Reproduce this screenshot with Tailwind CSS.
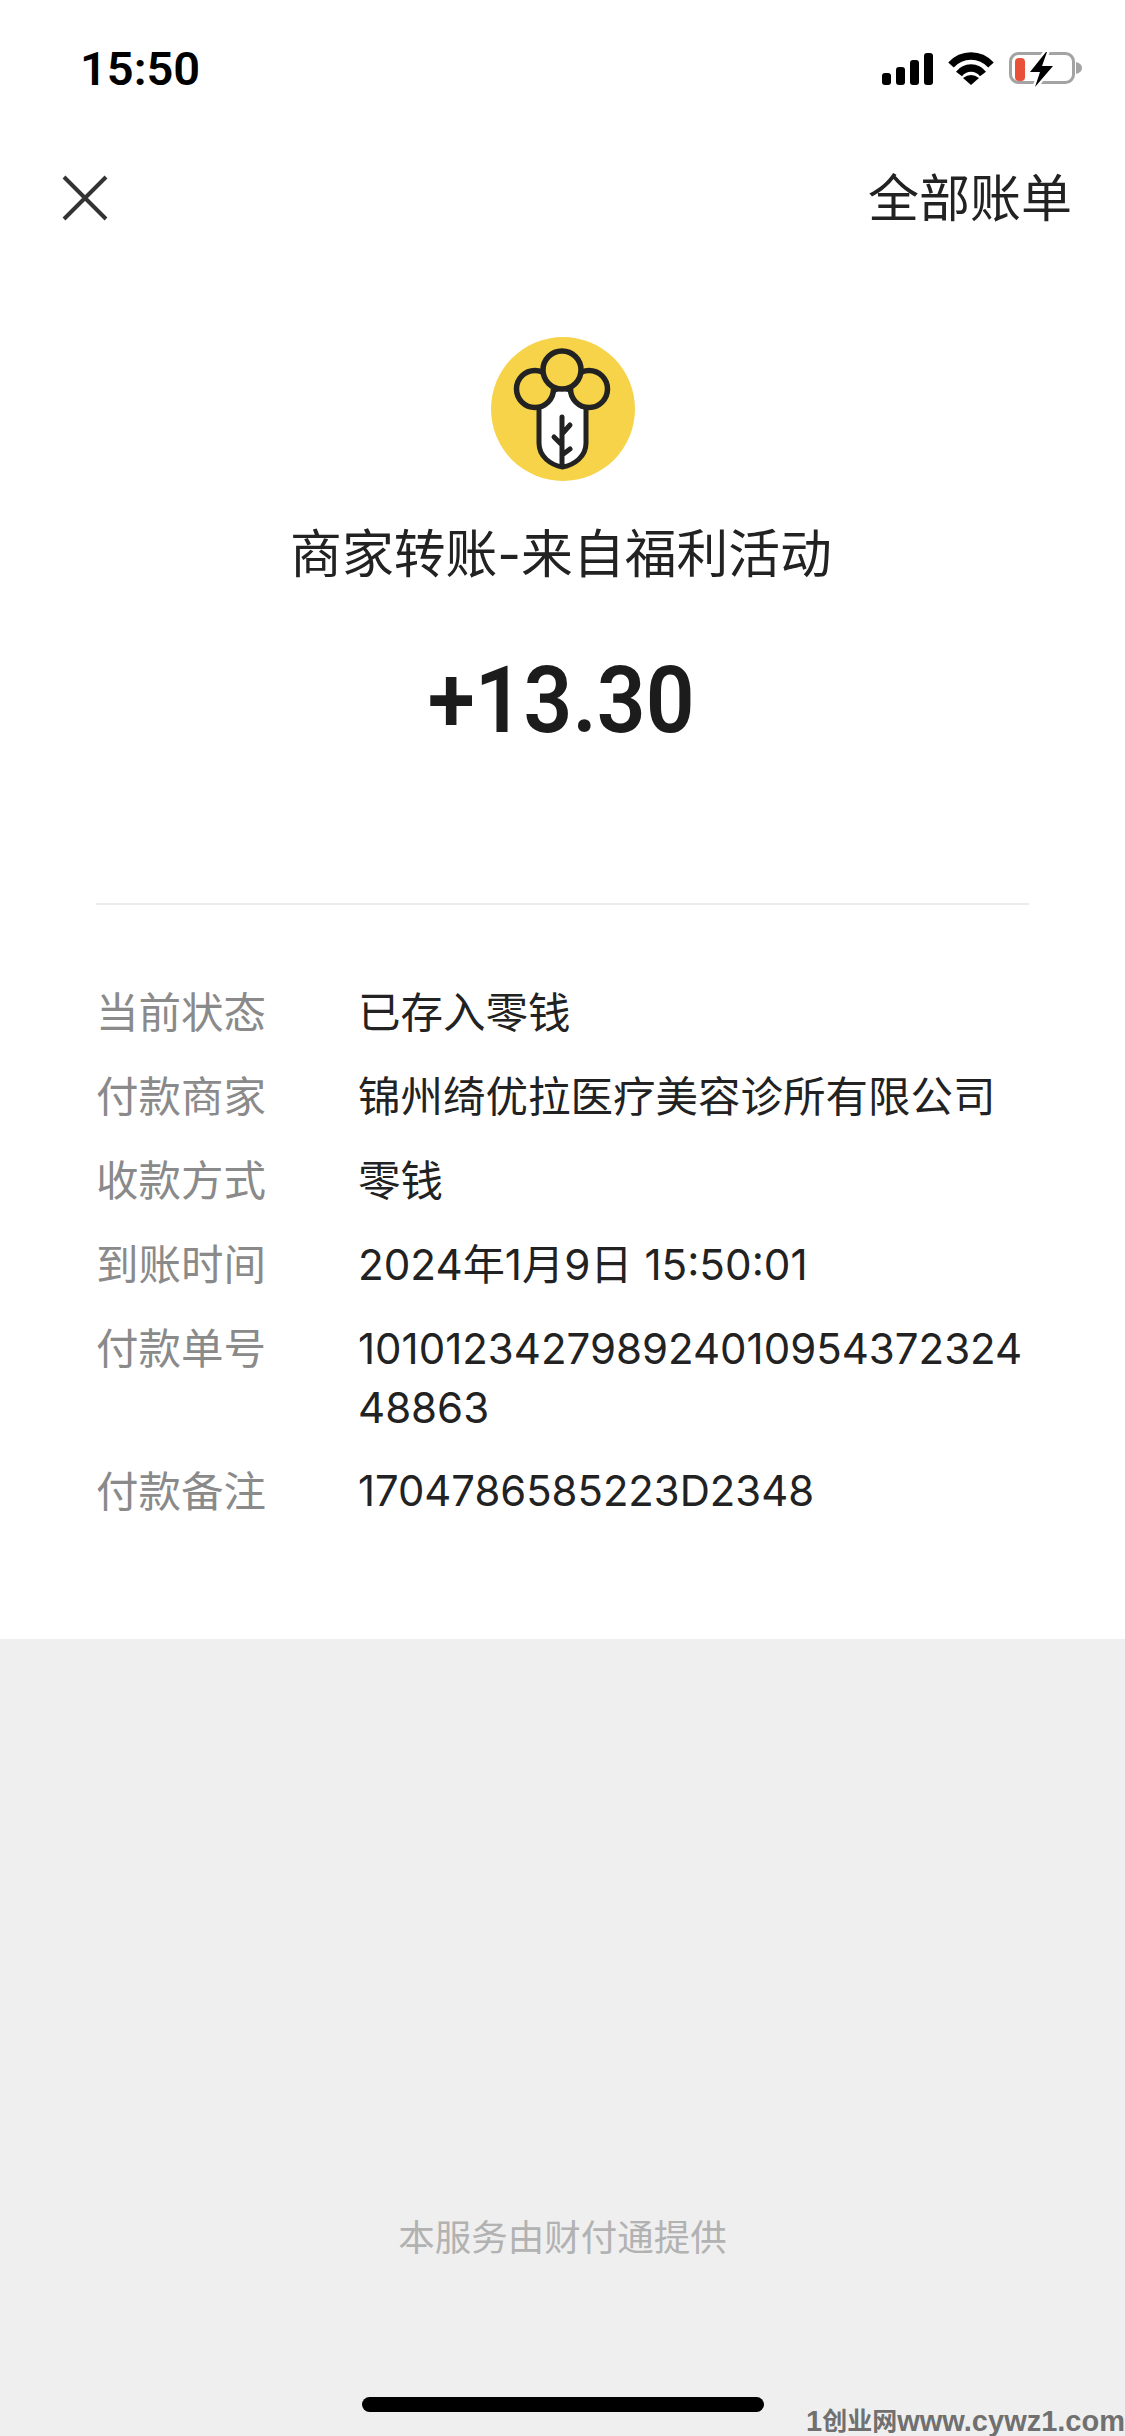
<!DOCTYPE html>
<html lang="zh-CN">
<head>
  <meta charset="UTF-8" />
  <meta name="viewport" content="width=device-width, initial-scale=1.0"/>
  <title>账单详情</title>
  <script src="https://cdn.jsdelivr.net/npm/@tailwindcss/browser@4"></script>
</head>
<body class="m-0 bg-[#efefef] font-['Inter','Noto_Sans_CJK_SC',sans-serif]">
  <div class="relative flex h-[2436px] w-[1125px] flex-col overflow-hidden">
    <div class="flex h-[1639px] flex-col bg-white">
      <!-- status bar -->
      <div class="flex h-[136px] shrink-0 items-center justify-between pl-[80px] pr-[43px]">
        <span class="text-[47px] leading-none font-semibold text-black font-['Roboto',sans-serif]">15:50</span>
        <div class="flex items-center gap-[15px]">
          <svg class="mt-[2px]" width="51" height="32" viewBox="0 0 51 32" fill="#000">
            <rect x="0" y="20" width="9" height="12" rx="3"/>
            <rect x="14" y="14" width="9" height="18" rx="3"/>
            <rect x="28" y="7" width="9" height="25" rx="3"/>
            <rect x="42" y="0" width="9" height="32" rx="3"/>
          </svg>
          <svg width="46" height="34" viewBox="0 0 46 34" fill="none" stroke="#000">
            <path d="M3 14 C14 2 32 2 43 14" stroke-width="7.500"/>
            <path d="M11 23 C17 15 29 15 35 23" stroke-width="7.500"/>
            <path d="M15 27 Q23 21 31 27 L23 34 Z" fill="#000" stroke="none"/>
          </svg>
          <svg width="73" height="38" viewBox="0 0 73 38" fill="none">
            <rect x="1.500" y="4.500" width="63" height="29" rx="8" stroke="#a3a3a3" stroke-width="3"/>
            <rect x="6" y="9" width="10" height="23" rx="4" fill="#e8503a"/>
            <path d="M67 13 C71 14 73 16 73 19 C73 22 71 24 67 25 Z" fill="#a3a3a3"/>
            <path d="M37 3 L21 23 H31 L26 38 L44 17 H33 L38 3 Z" fill="#000" stroke="#fff" stroke-width="5" paint-order="stroke"/>
          </svg>
        </div>
      </div>

      <!-- nav bar -->
      <div class="flex h-[124px] shrink-0 items-center justify-between pl-[62px] pr-[53px]">
        <svg width="46" height="46" viewBox="0 0 46 46" stroke="#333" stroke-width="4" fill="none">
          <path d="M2 2 L44 44 M44 2 L2 44"/>
        </svg>
        <span class="text-[51px] leading-none text-[#222]">全部账单</span>
      </div>

      <!-- payer logo, title and amount -->
      <div class="flex shrink-0 flex-col items-center pt-[77px]">
        <svg width="144" height="144" viewBox="0 0 144 144">
          <circle cx="72" cy="72" r="72" fill="#f6d348"/>
          <path d="M48 60 V106 C48 120 60 128 71.500 130 C83 128 95 120 95 106 V60 L71 50 Z" fill="#fff" stroke="#222" stroke-width="5"/>
          <g fill="#f6d348" stroke="#222" stroke-width="5.500">
            <circle cx="44" cy="52" r="18.500"/>
            <circle cx="98" cy="52" r="18.500"/>
            <circle cx="71" cy="33" r="19"/>
          </g>
          <path d="M71 80 V127 M71 97 L79 88 M71 108 L63 100 M71 118 L79 112" stroke="#222" stroke-width="5" stroke-linecap="round" fill="none"/>
        </svg>
        <div class="mt-[29px] pr-[3px] text-[51.800px] leading-[88px] text-[#222]">商家转账-来自福利活动</div>
        <div class="mt-[53px] scale-x-[0.92] pr-[2px] text-[93px] leading-[100px] font-semibold text-[#1c1c1c] font-['Roboto',sans-serif]">+13.30</div>
      </div>

      <!-- transaction details -->
      <div class="mx-[96px] mt-[152px] flex flex-col gap-[25px] border-t-2 border-[#ececec] pt-[78px] text-[42px] leading-[59px]">
        <div class="flex"><span class="w-[262px] shrink-0 text-[42.500px] text-[#8a8a8a]">当前状态</span><span class="text-[42.500px] text-[#222]">已存入零钱</span></div>
        <div class="flex"><span class="w-[262px] shrink-0 text-[42.500px] text-[#8a8a8a]">付款商家</span><span class="text-[42.500px] text-[#222]">锦州绮优拉医疗美容诊所有限公司</span></div>
        <div class="flex"><span class="w-[262px] shrink-0 text-[42.500px] text-[#8a8a8a]">收款方式</span><span class="text-[42.500px] text-[#222]">零钱</span></div>
        <div class="flex"><span class="w-[262px] shrink-0 text-[42.500px] text-[#8a8a8a]">到账时间</span><span class="text-[42.200px] text-[#222]">2024年1月9日 15:50:01</span></div>
        <div class="flex"><span class="w-[262px] shrink-0 text-[42.500px] text-[#8a8a8a]">付款单号</span><span class="w-[670px] break-all text-[#222]">101012342798924010954372324 48863</span></div>
        <div class="flex"><span class="w-[262px] shrink-0 text-[42.500px] text-[#8a8a8a]">付款备注</span><span class="text-[41.800px] text-[#222]">1704786585223D2348</span></div>
      </div>
    </div>

    <!-- footer -->
    <div class="flex flex-1 flex-col items-center">
      <div class="mt-[575px] text-[36.500px] leading-[48px] text-[#b2b2b2]">本服务由财付通提供</div>
      <div class="mt-[135px] h-[15px] w-[402px] rounded-full bg-black"></div>
    </div>

    <!-- site watermark stamped over the corner -->
    <div class="absolute right-0 bottom-0 flex items-end whitespace-nowrap text-[29px] leading-[30px] font-bold text-[#707070] font-['Liberation_Sans','Noto_Sans_CJK_SC',sans-serif]">1<span class="text-[25px]">创业网</span>www.cywz1.com</div>
  </div>
</body>
</html>
